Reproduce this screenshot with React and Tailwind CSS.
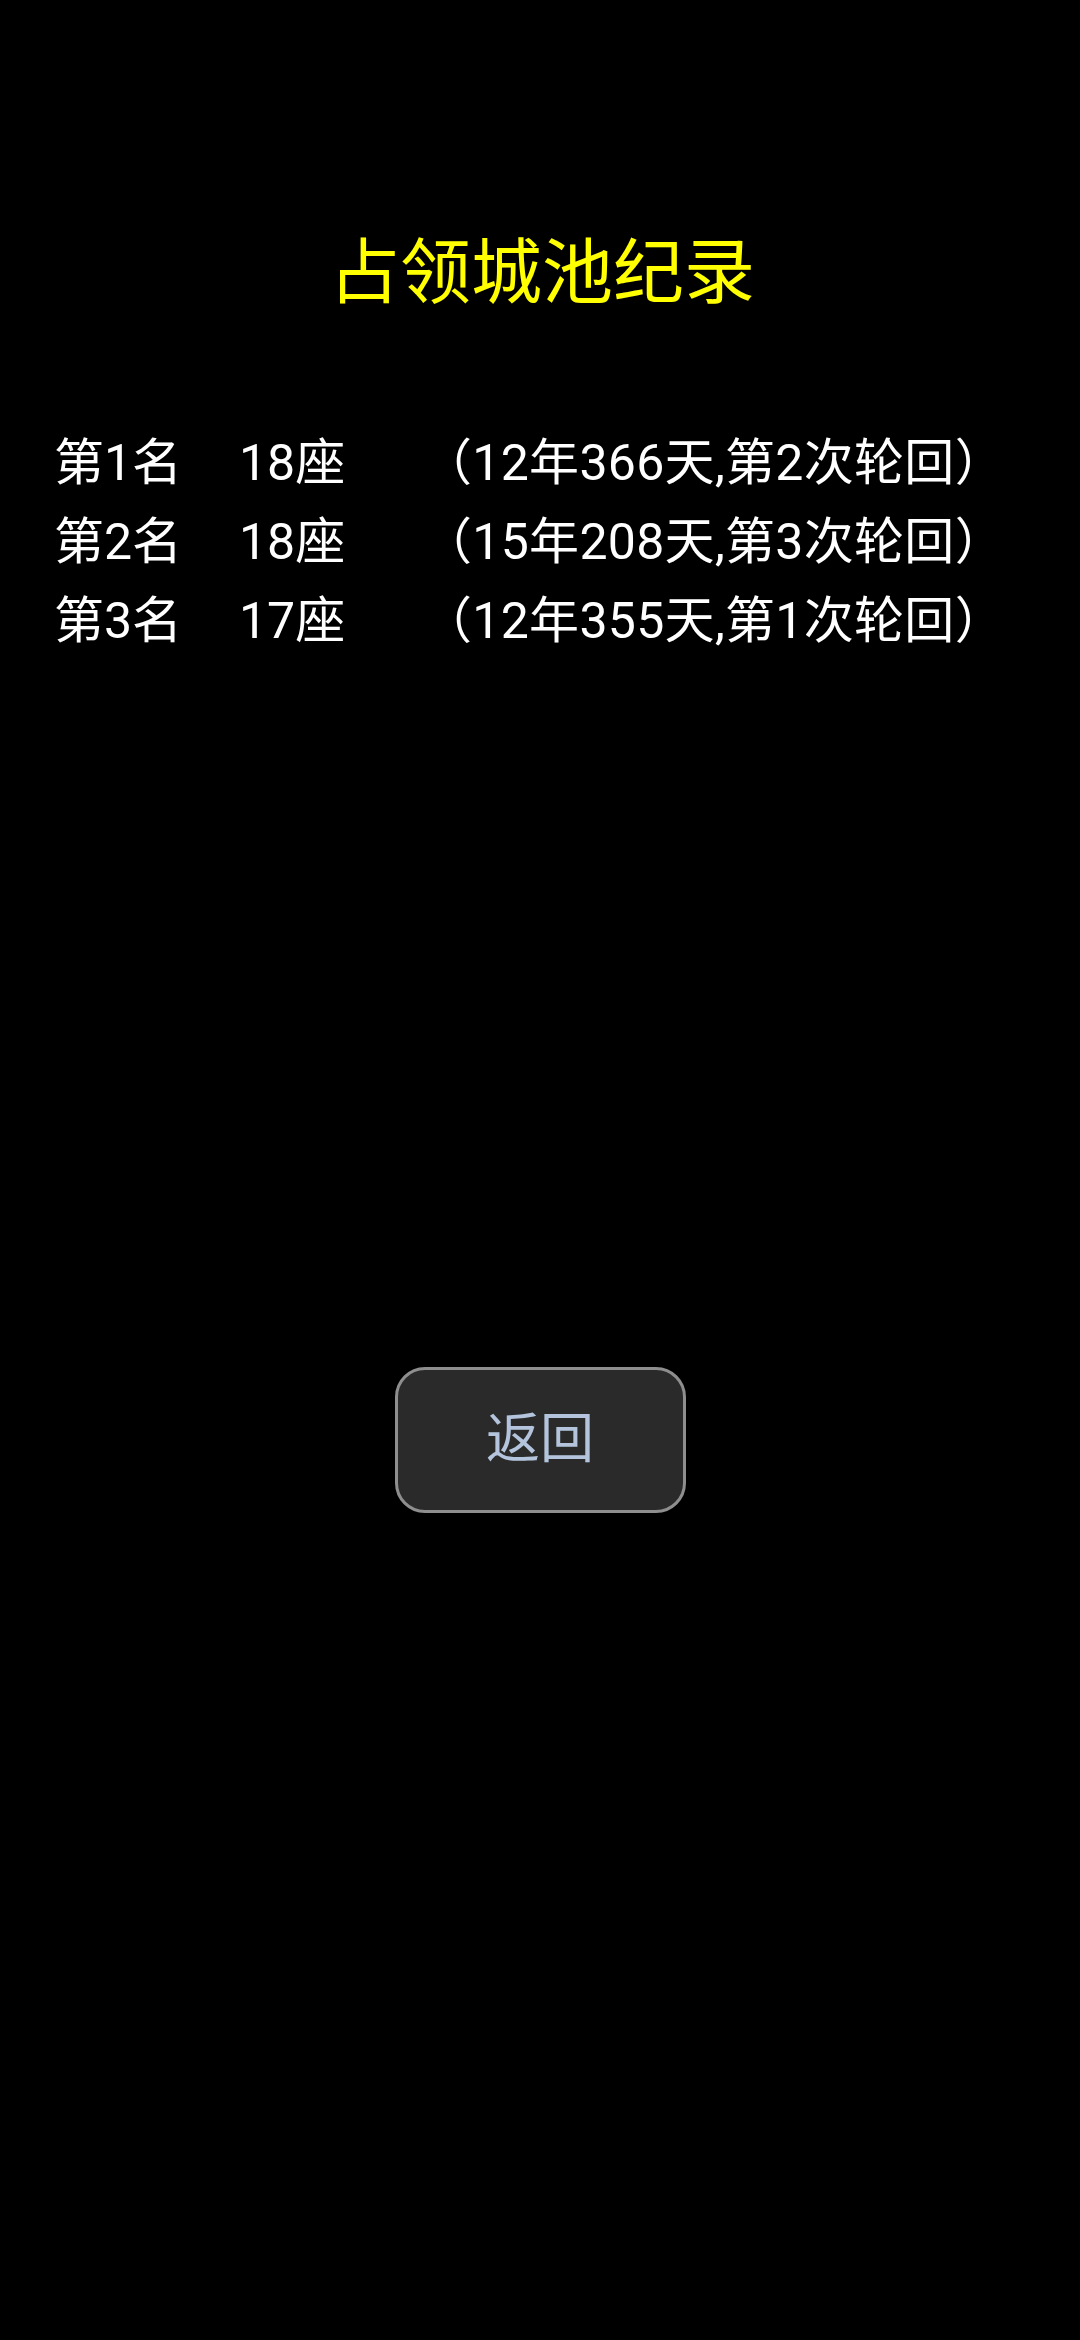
import React from 'react'

const records = [
  { rank: '第1名', seats: '18座', detail: '（12年366天,第2次轮回）' },
  { rank: '第2名', seats: '18座', detail: '（15年208天,第3次轮回）' },
  { rank: '第3名', seats: '17座', detail: '（12年355天,第1次轮回）' },
]

export default function App() {
  return (
    <div
      className="min-h-screen bg-black flex flex-col"
      style={{ fontFamily: 'Roboto, "Noto Sans CJK SC", sans-serif' }}
    >
      {/* Title */}
      <h1 className="pt-[231px] pl-[4px] text-center text-[71px] leading-[84px] text-[#ffff00] font-normal">
        占领城池纪录
      </h1>

      {/* Records */}
      <div className="mt-[109px] pl-[54px] text-white text-[50px] leading-[79px]">
        {records.map((r) => (
          <div key={r.rank} className="flex whitespace-nowrap">
            <span className="w-[185px]">{r.rank}</span>
            <span className="w-[183px]">{r.seats}</span>
            <span className="tracking-[0.3px]">{r.detail}</span>
          </div>
        ))}
      </div>

      {/* Back button */}
      <div className="mt-[706px] flex justify-center">
        <button className="w-[291px] h-[146px] rounded-[30px] border-[3px] border-[#8e8e8e] bg-[#2a2a2a] text-[#b4c4dc] text-[54px] leading-none">
          返回
        </button>
      </div>
    </div>
  )
}
